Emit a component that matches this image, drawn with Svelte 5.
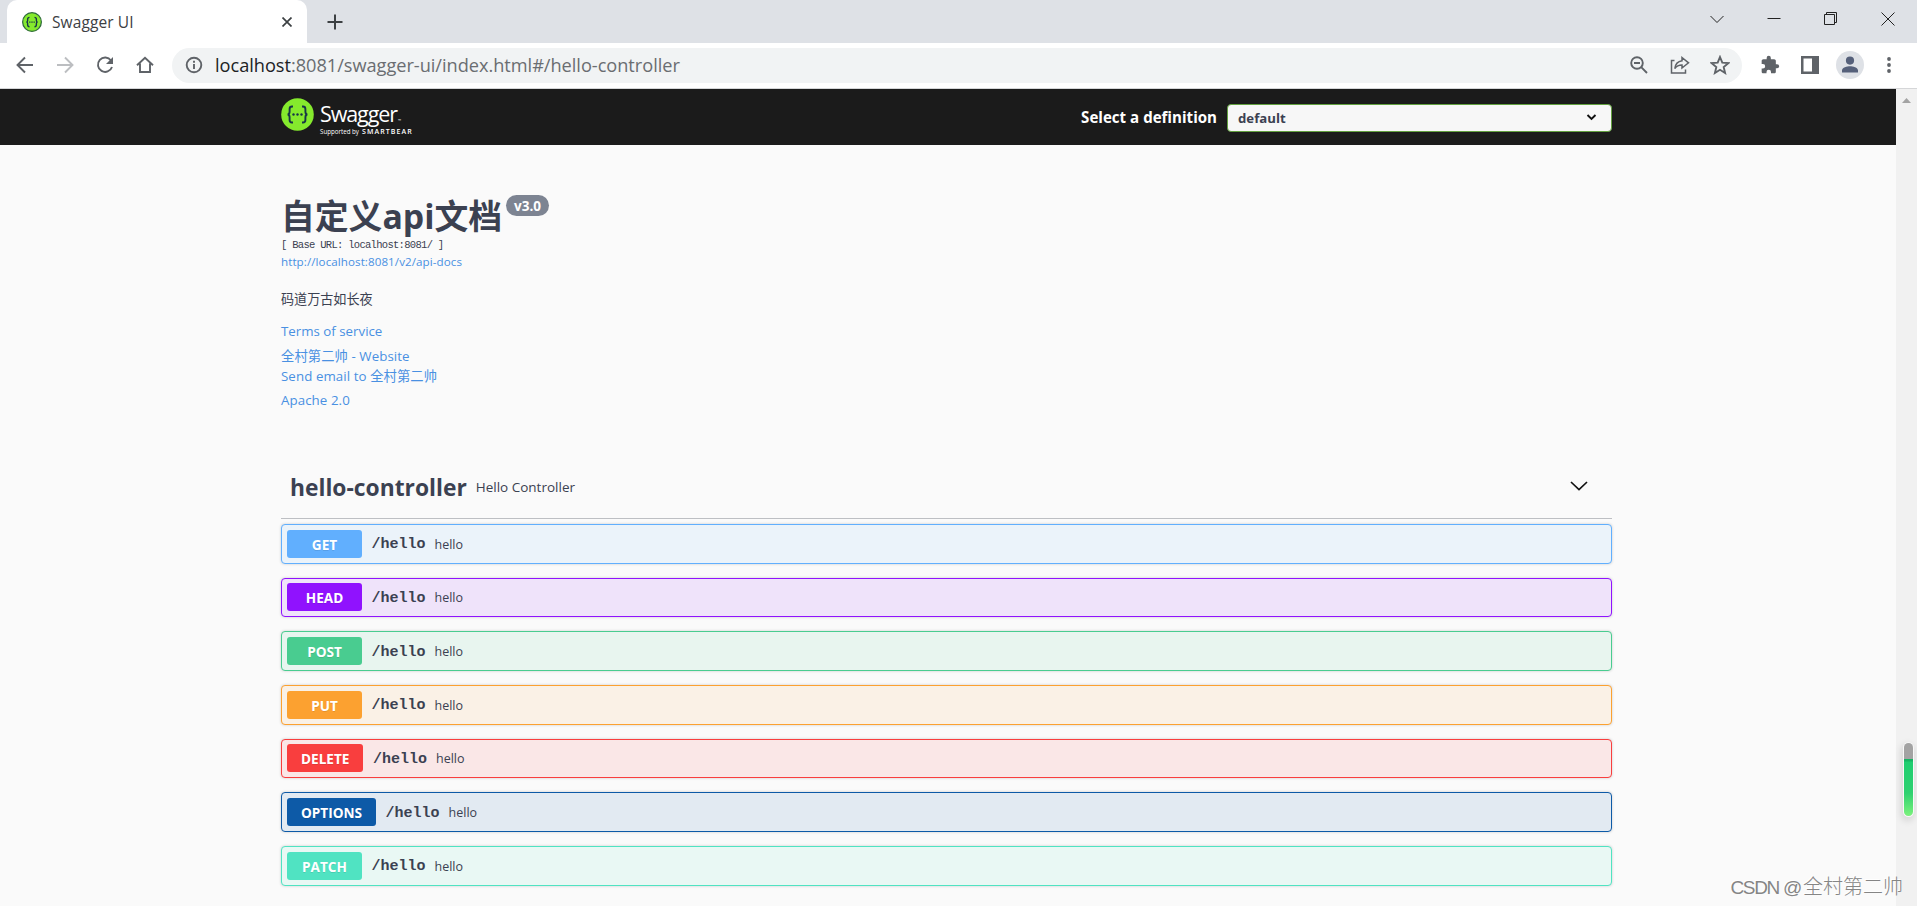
<script lang="ts">
	type Operation = { method: string; path: string; summary: string };

	const operations: Operation[] = [
		{ method: 'get', path: '/hello', summary: 'hello' },
		{ method: 'head', path: '/hello', summary: 'hello' },
		{ method: 'post', path: '/hello', summary: 'hello' },
		{ method: 'put', path: '/hello', summary: 'hello' },
		{ method: 'delete', path: '/hello', summary: 'hello' },
		{ method: 'options', path: '/hello', summary: 'hello' },
		{ method: 'patch', path: '/hello', summary: 'hello' }
	];

	const definitions = ['default'];
</script>

<div class="browser">
	<div class="tab-strip">
		<div class="tab">
			<svg class="favicon" width="20" height="20" viewBox="0 0 32 32">
				<circle cx="16" cy="16" r="15" fill="#85ea2d" stroke="#2f6b3c" stroke-width="2" />
				<path
					d="M12 8.500c-2.500 0-3 .8-3 3v2c0 1.500-.5 2.500-2 2.500 1.500 0 2 1 2 2.500v2c0 2.200.5 3 3 3M20 8.500c2.500 0 3 .8 3 3v2c0 1.500.5 2.500 2 2.500-1.500 0-2 1-2 2.500v2c0 2.200-.5 3-3 3"
					fill="none"
					stroke="#173647"
					stroke-width="2.200"
				/>
				<path d="M11.500 16h9" stroke="#173647" stroke-width="2" stroke-dasharray="2 1.500" />
			</svg>
			<span class="tab-title">Swagger UI</span>
			<svg class="tab-close" width="10" height="10" viewBox="0 0 10 10">
				<path d="M.5 .5l9 9M9.500 .5l-9 9" stroke="#3c4043" stroke-width="1.700" />
			</svg>
		</div>
		<svg class="new-tab" width="16" height="16" viewBox="0 0 16 16">
			<path d="M8 .5v15M.5 8h15" stroke="#3c4043" stroke-width="2" />
		</svg>
		<div class="window-buttons">
			<svg width="14" height="14" viewBox="0 0 14 14">
				<path d="M.5 4l6.500 6.500L13.500 4" />
			</svg>
			<svg width="14" height="14" viewBox="0 0 14 14">
				<path d="M.5 6.500h13" stroke="#000" />
			</svg>
			<svg width="14" height="14" viewBox="0 0 14 14">
				<path d="M.5 2.500h10v10H.5zM2.500 2.500V.5h10v10h-2" stroke="#000" />
			</svg>
			<svg width="14" height="14" viewBox="0 0 14 14">
				<path d="M.5 .5l13 13M13.500 .5l-13 13" />
			</svg>
		</div>
	</div>

	<div class="toolbar">
		<div class="navigation">
			<svg width="18" height="18" viewBox="0 0 18 18">
				<path d="M17 9H2M9 1.500L1.500 9 9 16.500" />
			</svg>
			<svg class="disabled" width="18" height="18" viewBox="0 0 18 18">
				<path d="M1 9h15M9 1.500L16.500 9 9 16.500" />
			</svg>
			<svg width="18" height="18" viewBox="0 0 18 18">
				<path d="M15 4.500A7.200 7.200 0 1 0 16 11" />
				<path d="M17 1v7h-7z" class="solid" />
			</svg>
			<svg width="18" height="18" viewBox="0 0 18 18">
				<path d="M1 9.200L9 1.800l8 7.400M4 7.500V16h10V7.500" />
			</svg>
		</div>
		<div class="address-bar">
			<svg class="info" width="18" height="18" viewBox="0 0 18 18">
				<circle cx="9" cy="9" r="7.300" />
				<path d="M9 8v5M9 4.800v1.900" />
			</svg>
			<span class="address"><b>localhost</b>:8081/swagger-ui/index.html#/hello-controller</span>
			<svg width="18" height="18" viewBox="0 0 18 18">
				<circle cx="7" cy="7" r="5.800" />
				<path d="M11.200 11.200l5.800 5.800M4 7h6" />
			</svg>
			<svg class="share" width="20" height="18" viewBox="0 0 20 18">
				<path d="M4.500 4.500H1.500v12.500h14v-3.500" />
				<path d="M12 1.500l6.500 5.300L12 12V9C8.500 9 6.500 10 4.800 12.500 5.300 8.500 7.500 5.500 12 4.800z" />
			</svg>
			<svg width="20" height="20" viewBox="0 0 20 20">
				<path d="M10 2l2.300 5.600 6 .5-4.600 4 1.400 5.900L10 14.800 4.900 18l1.400-5.900-4.600-4 6-.5z" />
			</svg>
		</div>
		<svg class="extensions" width="20" height="20" viewBox="0 0 24 24">
			<path
				class="solid"
				d="M20.500 11H19V7c0-1.100-.9-2-2-2h-4V3.500a2.500 2.500 0 0 0-5 0V5H4c-1.100 0-2 .9-2 2v3.800h1.500a2.700 2.700 0 0 1 0 5.400H2V20c0 1.100.9 2 2 2h3.800v-1.500a2.700 2.700 0 0 1 5.400 0V22H17c1.100 0 2-.9 2-2v-4h1.500a2.500 2.500 0 0 0 0-5z"
			/>
		</svg>
		<svg class="side-panel" width="18" height="18" viewBox="0 0 18 18">
			<path class="solid" fill-rule="evenodd" d="M0 0h18v18H0zM2.500 2.500v13H11v-13z" />
		</svg>
		<svg class="avatar" width="28" height="28" viewBox="0 0 28 28">
			<circle cx="14" cy="14" r="14" />
			<path d="M14 5.500a4.100 4.100 0 1 1 0 8.200 4.100 4.100 0 0 1 0-8.200zM6 21.500v-2.200c0-2.700 5.200-4.100 8-4.100s8 1.400 8 4.100v2.200z" />
		</svg>
		<svg class="more" width="4" height="18" viewBox="0 0 4 18">
			<circle cx="2" cy="3" r="1.900" />
			<circle cx="2" cy="9" r="1.900" />
			<circle cx="2" cy="15" r="1.900" />
		</svg>
	</div>

	<div class="viewport">
		<div class="page">
			<header>
				<div class="wrapper topbar">
					<div class="logo">
						<svg width="33" height="33" viewBox="0 0 33 33">
							<circle cx="16.500" cy="16.500" r="16.300" fill="#85ea2d" />
							<path
								d="M12 8.500h-1c-1.800 0-2.400.8-2.400 2.500v2.500c0 2-.6 2.900-2 3 1.400.1 2 1 2 3V22c0 1.700.6 2.500 2.400 2.500h1M21 8.500h1c1.800 0 2.400.8 2.400 2.500v2.500c0 2 .6 2.900 2 3-1.400.1-2 1-2 3V22c0 1.700-.6 2.500-2.400 2.500h-1"
								fill="none"
								stroke="#173647"
								stroke-width="1.900"
							/>
							<g fill="#173647">
								<circle cx="12.500" cy="16.500" r="1.200" />
								<circle cx="16.500" cy="16.500" r="1.200" />
								<circle cx="20.500" cy="16.500" r="1.200" />
							</g>
						</svg>
						<div class="brand">
							<div class="brand-name">Swagger<small>™</small></div>
							<div class="brand-owner"><span>Supported by</span><b>SMARTBEAR</b></div>
						</div>
					</div>
					<div class="definition">
						<span class="definition-label">Select a definition</span>
						<div class="select">
							<span>{definitions[0]}</span>
							<svg width="11" height="7" viewBox="0 0 11 7">
								<path d="M1.500 1l4 4 4-4" fill="none" stroke="#111" stroke-width="1.900" />
							</svg>
						</div>
					</div>
				</div>
			</header>

			<main class="wrapper">
				<section class="info-block">
					<h1><span class="title">自定义api文档</span><span class="version">v3.0</span></h1>
					<pre>[ Base URL: localhost:8081/ ]</pre>
					<a class="docs-link" href="#docs">http://localhost:8081/v2/api-docs</a>
					<p class="description">码道万古如长夜</p>
					<a class="terms" href="#terms">Terms of service</a>
					<a class="website" href="#website">全村第二帅 - Website</a>
					<a class="email" href="#email">Send email to 全村第二帅</a>
					<a class="license" href="#license">Apache 2.0</a>
				</section>

				<section>
					<div class="tag">
						<h2>hello-controller</h2>
						<span class="tag-description">Hello Controller</span>
						<svg width="18" height="10" viewBox="0 0 18 10">
							<path d="M1 1l8 7.500L17 1" fill="none" stroke="#111" stroke-width="1.700" />
						</svg>
					</div>
					<div class="operations">
						{#each operations as operation}
							<div class="operation {operation.method}">
								<span class="method">{operation.method.toUpperCase()}</span>
								<span class="path">{operation.path}</span>
								<span class="summary">{operation.summary}</span>
							</div>
						{/each}
					</div>
				</section>
			</main>
		</div>
		<div class="scrollbar">
			<svg width="9" height="5" viewBox="0 0 9 5">
				<path d="M0 5L4.500 0 9 5z" fill="#a3a3a3" />
			</svg>
			<div class="thumb"></div>
		</div>
	</div>
	<div class="watermark"><span>CSDN @</span>全村第二帅</div>
</div>

<style>
	:global(body) {
		margin: 0;
		overflow: hidden;
	}

	.browser {
		position: relative;
		display: flex;
		flex-direction: column;
		width: 1917px;
		height: 906px;
		overflow: hidden;
		color: #3b4151;
		font-family: 'Open Sans', 'Noto Sans CJK SC', sans-serif;
		background: #fafafa;
	}

	svg {
		display: block;
		flex: none;
	}

	/* browser chrome */
	.tab-strip {
		display: flex;
		align-items: center;
		height: 43px;
		background: #dee1e6;
	}

	.tab {
		display: flex;
		align-items: center;
		box-sizing: border-box;
		width: 300px;
		height: 43px;
		margin-left: 7px;
		padding: 0 15px;
		border-radius: 10px 10px 0 0;
		background: #fff;
	}

	.tab-title {
		flex: 1;
		margin: 1px 0 0 10px;
		color: #3c4043;
		font-size: 15.500px;
		letter-spacing: 0.1px;
	}

	.new-tab {
		margin-left: 20px;
	}

	.window-buttons {
		display: flex;
		gap: 43px;
		margin: 0 22px 5px auto;
	}

	.window-buttons path {
		fill: none;
		stroke: #222;
		stroke-width: 1;
	}

	.toolbar {
		display: flex;
		align-items: center;
		box-sizing: border-box;
		height: 46px;
		padding: 0 26px 1px 16px;
		border-bottom: 1px solid #d5d6d8;
		background: #fff;
	}

	.toolbar svg {
		fill: none;
		stroke: #5f6368;
		stroke-width: 1.900;
	}

	.toolbar .disabled {
		stroke: #bcbec1;
	}

	.toolbar .solid,
	.toolbar .more {
		fill: #5f6368;
		stroke: none;
	}

	.navigation {
		display: flex;
		gap: 22px;
		width: 156px;
	}

	.address-bar {
		display: flex;
		align-items: center;
		box-sizing: border-box;
		width: 1570px;
		height: 35px;
		padding: 0 12px 0 13px;
		border-radius: 18px;
		background: #f1f3f4;
	}

	.address {
		flex: 1;
		margin-left: 12px;
		color: #6a6d71;
		font-size: 18.200px;
		letter-spacing: -0.03px;
		white-space: nowrap;
	}

	.address b {
		color: #202124;
		font-weight: 400;
	}

	.address-bar .share {
		margin: 0 20px 0 22px;
		stroke-width: 1.500;
	}

	.extensions {
		margin-left: 18px;
	}

	.side-panel {
		margin-left: 21px;
	}

	.toolbar .avatar {
		margin: 0 23px 0 17px;
		fill: #55607a;
		stroke: none;
	}

	.avatar circle {
		fill: #dee1e6;
	}

	.viewport {
		display: flex;
		flex: 1;
		min-height: 0;
	}

	.page {
		flex: 1;
	}

	.wrapper {
		width: 1331px;
		margin-left: 281px;
	}

	/* swagger top bar */
	header {
		height: 56px;
		background: #1b1b1b;
	}

	.topbar {
		display: flex;
		align-items: center;
		justify-content: space-between;
		height: 56px;
	}

	.logo {
		display: flex;
		height: 38px;
		color: #fff;
	}

	.brand {
		margin-left: 6px;
	}

	.brand-name {
		height: 29px;
		font-size: 21.500px;
		line-height: 32px;
		letter-spacing: -1.1px;
	}

	.brand-name small {
		margin-left: 1px;
		font-size: 4px;
		letter-spacing: 0;
	}

	.brand-owner {
		display: flex;
		align-items: center;
		gap: 3px;
		font-size: 6.200px;
		line-height: 9px;
	}

	.brand-owner b {
		font-size: 7px;
		font-weight: 600;
		letter-spacing: 1.1px;
	}

	.definition {
		display: flex;
		align-items: center;
		padding-top: 1px;
	}

	.definition-label {
		margin: 0 10px 1px 0;
		color: #fff;
		font-size: 15.100px;
		font-weight: 700;
	}

	.select {
		display: flex;
		align-items: center;
		justify-content: space-between;
		box-sizing: border-box;
		width: 385px;
		height: 28px;
		padding: 0 14px 0 10px;
		border: 1px solid #62a03f;
		border-radius: 4px;
		background: #f7f7f7;
		font-size: 13.200px;
		font-weight: 700;
	}

	/* api information */
	.info-block {
		display: flex;
		flex-direction: column;
		align-items: flex-start;
		box-sizing: border-box;
		height: 317px;
		padding-top: 46px;
	}

	h1 {
		display: flex;
		align-items: flex-start;
		height: 47px;
		margin: 0;
		font-size: 33.800px;
		line-height: 51px;
	}

	.title {
		width: 220px;
		white-space: nowrap;
	}

	.version {
		width: 43px;
		height: 21px;
		margin: 4px 0 0 5px;
		border-radius: 11px;
		background: #7d8492;
		color: #fff;
		font-size: 13.500px;
		line-height: 22px;
		text-align: center;
	}

	pre {
		height: 14px;
		margin: 0;
		font-family: 'Liberation Mono', monospace;
		font-size: 10.500px;
		line-height: 14px;
		letter-spacing: -0.7px;
	}

	a {
		color: #4990e2;
		font-size: 13.300px;
		line-height: 20px;
		letter-spacing: 0.08px;
		text-decoration: none;
	}

	.docs-link {
		font-size: 11.600px;
	}

	.description {
		margin: 17px 0 0;
		font-size: 13.100px;
		line-height: 20px;
	}

	.terms {
		margin-top: 12px;
		letter-spacing: 0;
	}

	.website {
		margin-top: 5px;
	}

	.license {
		margin-top: 4px;
	}

	/* operations */
	.tag {
		display: flex;
		align-items: center;
		box-sizing: border-box;
		height: 57px;
		padding: 0 24px 6px 9px;
		border-bottom: 1px solid #bdbfc3;
	}

	.tag h2 {
		margin: 0;
		font-size: 22.800px;
	}

	.tag-description {
		margin-left: 9px;
		font-size: 13.500px;
	}

	.tag svg {
		margin: 0 0 2px auto;
	}

	.operations {
		padding-top: 5px;
	}

	.operation {
		--color: #61affe;
		display: flex;
		align-items: center;
		box-sizing: border-box;
		height: 39.670px;
		margin-bottom: 14px;
		padding: 0 5px;
		border: 1px solid var(--color);
		border-radius: 4px;
		background: color-mix(in srgb, var(--color) 10%, #fafafa);
		box-shadow: 0 0 3px rgba(0, 0, 0, 0.19);
	}

	.method {
		box-sizing: border-box;
		min-width: 75px;
		height: 28px;
		padding: 0 14px;
		border-radius: 3px;
		background: var(--color);
		color: #fff;
		font-size: 13.600px;
		font-weight: 700;
		line-height: 29px;
		text-align: center;
		text-shadow: 0 1px 0 rgba(0, 0, 0, 0.1);
	}

	.path {
		margin: 2px 0 0 9.500px;
		font-family: 'Liberation Mono', monospace;
		font-size: 15px;
		font-weight: 700;
	}

	.summary {
		margin: 1px 0 0 9px;
		font-size: 12.500px;
	}

	.head {
		--color: #9012fe;
	}

	.post {
		--color: #49cc90;
	}

	.put {
		--color: #fca130;
	}

	.delete {
		--color: #f93e3e;
	}

	.options {
		--color: #0d5aa7;
	}

	.patch {
		--color: #50e3c2;
	}

	/* scrollbar and overlay */
	.scrollbar {
		display: flex;
		flex-direction: column;
		align-items: center;
		width: 21px;
		padding-top: 9px;
		background: #f1f1f1;
		box-sizing: border-box;
	}

	.thumb {
		width: 9px;
		height: 73px;
		margin: 640px 0 0 4px;
		border-radius: 5px;
		background: linear-gradient(#a3a3a3 16px, #16b563 16px, #16b563 18px, #1fce70 19px, #2fd170 50px, #7bf27c 73px);
		box-shadow: 0 0 0 1px #f8f8f8, -1px 3px 7px 2px rgba(0, 0, 0, 0.12);
	}

	.watermark {
		position: absolute;
		right: 14px;
		bottom: 3px;
		color: #858585;
		font-family: 'Liberation Sans', 'Noto Sans CJK SC', sans-serif;
		font-size: 20px;
		font-weight: 300;
		line-height: 30px;
		text-shadow: -1px -1px 0 #fff;
	}

	.watermark span {
		margin-right: 2px;
		font-size: 19px;
		letter-spacing: -1.3px;
	}
</style>
